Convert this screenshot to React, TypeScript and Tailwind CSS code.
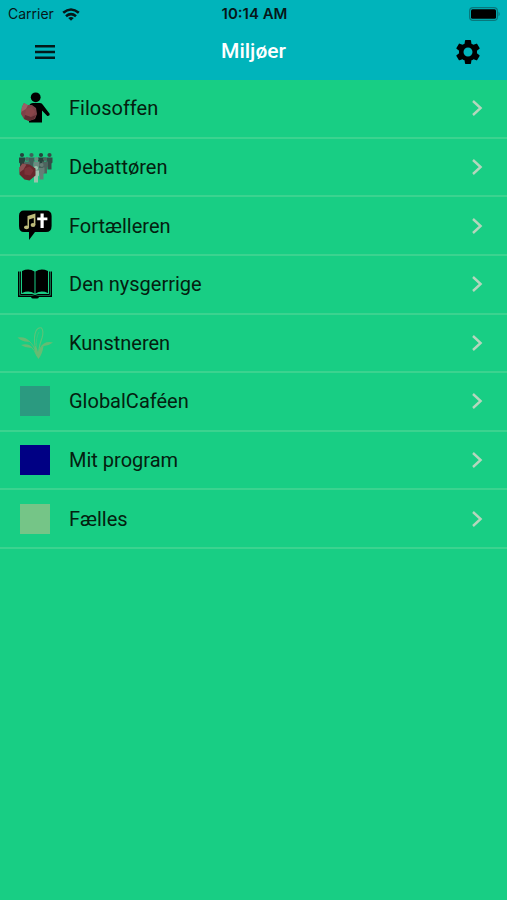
import type { ReactNode } from 'react';
import { MdSettings } from 'react-icons/md';

function Boulder() {
  return (
    <g>
      <path d="M5 17 L7 13 L10 15 L15 15 L19 18 L20 24 L18 29 L12 31 L7 29 L4 24 Z" fill="#7d4248" />
      <path d="M5 17 L7 13 L11 15 L9 19 L4 22 Z" fill="#9c5f66" />
      <path d="M9 19 L15 17 L18 22 L14 27 L8 25 Z" fill="#884549" />
      <path d="M8 25 L14 27 L19 25 L17 29 L12 31 L7 29 Z" fill="#5e2d32" />
    </g>
  );
}

function PhilosopherIcon() {
  return (
    <svg viewBox="0 0 36 36" className="size-9" aria-hidden="true">
      <circle cx="18.7" cy="7.3" r="4.9" />
      <path d="M16 13 H23 Q25 13 26 15 L32.8 24 Q32.6 26.3 30.3 26 L25 20.5 V32.5 H12 V16 Q13 13 16 13 Z" />
      <Boulder />
    </svg>
  );
}

const crowd = [
  { x: 5, y: 6, fill: '#26433d' },
  { x: 14.5, y: 6, fill: '#3f605a' },
  { x: 24, y: 6, fill: '#26433d' },
  { x: 32.5, y: 6, fill: '#354c47' },
  { x: 10, y: 10, fill: '#4f6963' },
  { x: 19.5, y: 10, fill: '#6c8a80' },
  { x: 28, y: 10, fill: '#4d645e' },
  { x: 24.5, y: 16, fill: '#657e76' },
  { x: 19, y: 19, fill: '#9cc3ae' },
];

function DebateIcon() {
  return (
    <svg viewBox="0 0 36 36" className="size-9" aria-hidden="true">
      {crowd.map((p) => (
        <g key={`${p.x}-${p.y}`} fill={p.fill}>
          <circle cx={p.x} cy={p.y} r="2.1" />
          <path d={`M${p.x - 3} ${p.y + 2.4} h6 v5 l-1 1 v6 h-4 v-6 l-1 -1 Z`} />
        </g>
      ))}
      <g transform="translate(-1.5 0.5)">
        <path d="M4 18 L7 14 L14 15 L20 19 L20 26 L14 31 L9 30 L4 25 Z" fill="#68272c" />
        <path d="M4 18 L7 14 L11 15 L8 20 L4 23 Z" fill="#8c5254" />
        <path d="M9 19 L14 17 L18 21 L15 26 L9 25 Z" fill="#7b3238" />
      </g>
    </svg>
  );
}

function StoryIcon() {
  return (
    <svg viewBox="0 0 36 36" className="size-9" aria-hidden="true">
      <path d="M7 2.5 H29 Q34.6 2.5 34.6 8 V18 Q34.6 24 29 24 H18 L12 32 V24 H7 Q2 24 2 18 V8 Q2 2.5 7 2.5 Z" />
      <g fill="#bdbb7b">
        <ellipse cx="9.5" cy="19.3" rx="2.5" ry="1.9" />
        <ellipse cx="16" cy="17" rx="2.4" ry="1.9" />
        <path d="M10.5 8 L18.4 5.5 V17 H16.8 V10 L12 11.5 V19.3 H10.5 Z" />
      </g>
      <path d="M23.5 5.5 H26.7 V9.5 H30.4 V12.3 H26.7 V20 H23.5 V12.3 H20.2 V9.5 H23.5 Z" fill="#fff" />
    </svg>
  );
}

function BookIcon() {
  return (
    <svg viewBox="0 0 36 36" className="size-9" aria-hidden="true">
      <path d="M5 5 Q12 2 17.5 5.5 V27.5 Q12 24 5 27 Z" />
      <path d="M31 5 Q24 2 18.5 5.5 V27.5 Q24 24 31 27 Z" />
      <path d="M3.4 5.5 V28.5 H15 Q18 30.5 21 28.5 H32.6 V5.5" fill="none" stroke="#000" strokeWidth="1" />
      <path d="M1 5.5 H2.4 V29.5 H33.6 V5.5 H35 V31 H22 Q21.5 32.5 20 32.5 H16 Q14.5 32.5 14 31 H1 Z" />
    </svg>
  );
}

function PlantIcon() {
  return (
    <svg viewBox="0 0 36 36" className="size-9" fill="#66bc73" aria-hidden="true">
      <path d="M0.5 12.5 Q8 11 13 16.5 Q7 18 0.5 12.5 Z" />
      <path d="M4 20 Q11 17.5 15.5 22.5 Q9 23.5 4 20 Z" />
      <path d="M23 23 Q27 15.5 36 17.5 Q32 20.5 27 21 Z" />
      <path d="M12 16 Q17 20 19.5 29 M14 22 Q17 24 20 31 M24 22 Q22.5 25 21.5 30" fill="none" stroke="#5cbf74" strokeWidth="1" />
      <path d="M18 20 Q16.5 12 19 6 Q21 2 24.5 3 Q27 6 25 13 Q22.5 19 21.5 28" fill="none" stroke="#5bc477" strokeWidth="1.1" />
      <path d="M19.8 22 Q18.5 13 22 7" fill="none" stroke="#43c979" strokeWidth="0.8" />
      <path d="M21.5 34 Q16.5 28 17.5 19 Q20.5 23 21 27 Q23 22 26.5 21 Q25.5 29 21.5 34 Z" />
    </svg>
  );
}

function Chevron() {
  return (
    <svg viewBox="0 0 12 18" className="h-[18px] w-3" fill="none" stroke="#b5d6bd" strokeWidth="2.4" aria-hidden="true">
      <path d="M2 2 L9.6 9 L2 16" />
    </svg>
  );
}

function MenuIcon() {
  return (
    <svg viewBox="0 0 20 14" className="h-[14px] w-5" aria-hidden="true">
      <path d="M0 0 H20 V2.4 H0 Z M0 5.8 H20 V8.2 H0 Z M0 11.6 H20 V14 H0 Z" fill="#04191a" />
    </svg>
  );
}

function WifiIcon() {
  return (
    <svg viewBox="0 0 18 13" className="h-[13px] w-[18px]" fill="none" stroke="#071718" strokeWidth="2.6" aria-hidden="true">
      <path d="M1.2 4.8 Q9 -1.8 16.8 4.8" />
      <path d="M4 8.2 Q9 4 14 8.2" />
      <path d="M9 12.8 L6.2 10 Q9 7.9 11.8 10 Z" fill="#071718" stroke="none" />
    </svg>
  );
}

function BatteryIcon() {
  return (
    <svg viewBox="0 0 32 14" className="h-[14px] w-8" aria-hidden="true">
      <rect x="0.6" y="0.6" width="27.8" height="12.8" rx="3.5" fill="none" stroke="#08777c" strokeWidth="1.2" />
      <rect x="2" y="2.3" width="25" height="9.4" rx="1.5" />
      <path d="M29.5 4.5 Q32 7 29.5 9.5 Z" fill="#08777c" />
    </svg>
  );
}

interface Environment {
  name: string;
  icon: ReactNode;
}

const environments: Environment[] = [
  { name: 'Filosoffen', icon: <PhilosopherIcon /> },
  { name: 'Debattøren', icon: <DebateIcon /> },
  { name: 'Fortælleren', icon: <StoryIcon /> },
  { name: 'Den nysgerrige', icon: <BookIcon /> },
  { name: 'Kunstneren', icon: <PlantIcon /> },
  { name: 'GlobalCaféen', icon: <span className="size-[30px] bg-[#2b9a80]" /> },
  { name: 'Mit program', icon: <span className="size-[30px] bg-[#000084]" /> },
  { name: 'Fælles', icon: <span className="size-[30px] bg-[#75c587]" /> },
];

export default function App() {
  return (
    <div className="min-h-screen bg-[#18ce84] font-['Roboto',sans-serif] text-black">
      <header className="bg-[#00b4bb]">
        {/* Status bar */}
        <div className="grid h-7 grid-cols-[1fr_auto_1fr] items-center pr-1.5 pl-2 font-['Inter',sans-serif] text-[#071718]">
          <div className="flex items-center gap-2 text-sm">
            <span>Carrier</span>
            <WifiIcon />
          </div>
          <span className="text-[15px] font-semibold">10:14 AM</span>
          <div className="flex justify-end">
            <BatteryIcon />
          </div>
        </div>

        {/* Navigation bar */}
        <nav className="grid h-[52px] grid-cols-[1fr_auto_1fr] items-center px-6 pb-1">
          <button type="button" aria-label="Menu" className="ml-[11px] justify-self-start">
            <MenuIcon />
          </button>
          <h1 className="text-[21px] font-medium text-white">Miljøer</h1>
          <button type="button" aria-label="Indstillinger" className="justify-self-end">
            <MdSettings className="size-[30px]" />
          </button>
        </nav>
      </header>

      <main>
        <ul className="grid min-h-[469px] auto-rows-fr">
          {environments.map((env) => (
            <li key={env.name} className="border-b-2 border-[#3bd38f]">
              <a href="#" className="flex h-full items-center pr-6 pl-[17px]">
                <span className="flex size-9 items-center justify-center">{env.icon}</span>
                <span className="ml-4 flex-1 text-xl text-[#04200f]">{env.name}</span>
                <Chevron />
              </a>
            </li>
          ))}
        </ul>
      </main>
    </div>
  );
}
